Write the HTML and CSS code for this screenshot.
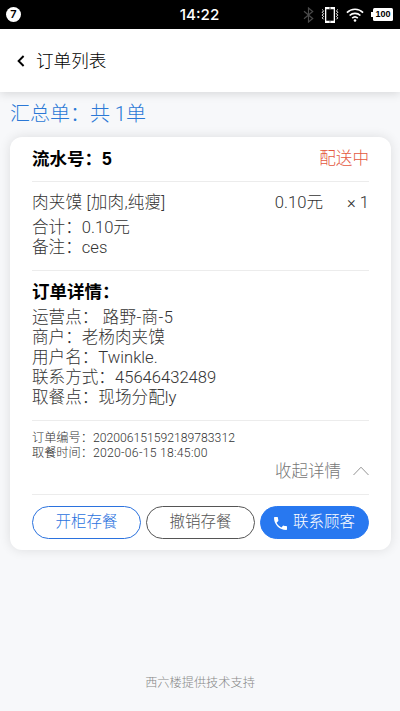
FILE: index.html
```html
<!DOCTYPE html>
<html lang="zh-CN">
<head>
<meta charset="utf-8">
<meta name="viewport" content="width=device-width, initial-scale=1">
<title>订单列表</title>
<link rel="stylesheet" href="styles.css">
</head>
<body>
<div class="status">
  <span class="badge">7</span>
  <span class="time">14:22</span>
  <div class="indicators">
    <svg class="bluetooth" width="11" height="16" viewBox="0 0 11 16"><path d="M1 4.3l8.7 7.2L5.5 15V1l4.2 3.5L1 11.7" fill="none" stroke="#4a4a4a" stroke-width="1.2"/></svg>
    <svg class="vibrate" width="18" height="16" viewBox="0 0 18 16"><path fill="#fff" fill-rule="evenodd" d="M4 0h10v16H4zM5.3 2.2v11.6h7.4V2.2z"/><path d="M8 1.1h2M8.3 14.9h1.4" stroke="#000" stroke-width=".7"/><path d="M1.2 2.5l1.4 1.4-1.4 1.4 1.4 1.4-1.4 1.4 1.4 1.4-1.4 1.4 1.4 1.4M16.8 2.5l-1.4 1.4 1.4 1.4-1.4 1.4 1.4 1.4-1.4 1.4 1.4 1.4-1.4 1.4" fill="none" stroke="#fff" stroke-width="1"/></svg>
    <svg class="wifi" width="18" height="14" viewBox="0 0 18 14"><path d="M.9 4.600a11.600 11.600 0 0 1 16.200 0M3.600 7.500a7.800 7.800 0 0 1 10.800 0M6.200 10.200a4.100 4.100 0 0 1 5.600 0" fill="none" stroke="#fff" stroke-width="1.6"/><circle cx="9" cy="12.5" r="1.3" fill="#fff"/></svg>
    <span class="battery">100</span>
  </div>
</div>
<header class="nav">
  <svg width="8" height="12" viewBox="0 0 8 12"><path d="M6.6 1L1.6 6l5 5" fill="none" stroke="#000" stroke-width="1.9"/></svg>
  <h1>订单列表</h1>
</header>
<main>
  <div class="summary">汇总单：共 1单</div>
  <article class="card">
    <div class="card-head"><h2>流水号：5</h2><span class="state">配送中</span></div>
    <section class="goods">
      <div class="item"><span class="name">肉夹馍 [加肉,纯瘦]</span><span class="price">0.10元</span><span class="count">× 1</span></div>
      <p>合计：0.10元</p>
      <p>备注：ces</p>
    </section>
    <section class="details">
      <h2>订单详情：</h2>
      <p>运营点：&nbsp;<span class="wide">路野-商-5</span></p>
      <p>商户：老杨肉夹馍</p>
      <p>用户名：Twinkle.</p>
      <p>联系方式：45646432489</p>
      <p>取餐点：现场分配ly</p>
    </section>
    <section class="meta">
      <p>订单编号：202006151592189783312</p>
      <p>取餐时间：<span class="date">2020-06-15 18:45:00</span></p>
      <div class="toggle"><span>收起详情</span><svg width="16" height="10" viewBox="0 0 16 10"><path d="M.5 9L8 1.2 15.5 9" fill="none" stroke="#888" stroke-width=".9"/></svg></div>
    </section>
    <div class="actions">
      <button class="btn open">开柜存餐</button>
      <button class="btn cancel">撤销存餐</button>
      <button class="btn call"><svg width="13" height="13" viewBox="3 3 18 18"><path fill="#fff" d="M6.6 10.8c1.4 2.8 3.8 5.1 6.6 6.6l2.2-2.2c.3-.3.7-.4 1-.2 1.1.4 2.3.6 3.6.6.6 0 1 .4 1 1V20c0 .6-.4 1-1 1C10.600 21 3 13.400 3 4c0-.6.4-1 1-1h3.500c.6 0 1 .4 1 1 0 1.200.2 2.400.6 3.600.1.300 0 .7-.2 1z"/></svg>联系顾客</button>
    </div>
  </article>
</main>
<footer>西六楼提供技术支持</footer>
</body>
</html>
```
FILE: styles.css
```css
* { box-sizing: border-box; }
h1, h2, p { margin: 0; }
body {
  margin: 0;
  height: 711px;
  display: flex;
  flex-direction: column;
  overflow: hidden;
  background: #f7f8fa;
  color: #333;
  font: 300 16.6px/20px Roboto, "Noto Sans CJK SC", sans-serif;
}
.status {
  height: 29px;
  flex: none;
  display: grid;
  grid-template-columns: 1fr auto 1fr;
  align-items: center;
  padding: 0 7px 0 6px;
  background: #000;
  color: #fff;
}
.badge {
  width: 15px;
  height: 15px;
  border-radius: 50%;
  background: #fff;
  color: #000;
  font: 600 11px/15px Inter, sans-serif;
  text-align: center;
}
.time { font: 500 15.2px/20px Inter, sans-serif; }
.indicators { display: flex; align-items: center; justify-content: flex-end; }
.bluetooth { margin-right: 7px; }
.wifi { margin-left: 7px; }
.battery {
  position: relative;
  width: 20px;
  height: 13px;
  margin-left: 9px;
  border-radius: 1.5px;
  background: #fff;
  color: #000;
  font: 700 9px/13px "Liberation Sans", sans-serif;
  text-align: center;
}
.battery::before {
  content: "";
  position: absolute;
  left: -2px;
  top: 4px;
  width: 2px;
  height: 5px;
  background: #fff;
}
.nav {
  height: 63px;
  flex: none;
  display: flex;
  align-items: center;
  gap: 11px;
  padding-left: 17px;
  background: #fff;
  box-shadow: 0 2px 9px rgba(0, 0, 0, .13);
}
h1 { font-size: 17.6px; font-weight: 300; color: #000; }
.summary { height: 45px; padding: 7px 10px 0; color: #2b78d6; font-size: 20px; line-height: 30px; }
.card {
  height: 413px;
  margin: 0 9px 0 10px;
  padding: 0 22px 0 22px;
  border-radius: 12px;
  background: #fff;
  box-shadow: 0 0 12px rgba(0, 0, 0, .11);
}
.card-head { height: 45px; display: flex; justify-content: space-between; line-height: 44px; border-bottom: 1px solid #ececec; }
h2 { color: #000; font-family: "Liberation Sans", "Noto Sans CJK SC", sans-serif; font-size: 17.5px; font-weight: 600; line-height: inherit; }
.state { color: #e4583e; }
.goods { height: 89px; padding-top: 11px; border-bottom: 1px solid #ececec; }
.item { display: flex; height: 25px; }
.name { letter-spacing: .2px; }
.price { margin-left: auto; }
.count { width: 46px; text-align: right; }
.details { height: 150px; padding-top: 11px; border-bottom: 1px solid #ececec; }
.details h2 { height: 26px; line-height: 20px; }
.wide { letter-spacing: .4px; }
.meta { height: 74px; padding-top: 10px; font-size: 12.2px; line-height: 15px; border-bottom: 1px solid #ececec; }
.date { letter-spacing: .27px; }
.toggle { display: flex; justify-content: flex-end; align-items: center; gap: 12px; height: 20px; color: #777; font-size: 16.5px; }
.actions { display: flex; justify-content: space-between; padding-top: 10.500px; }
.btn {
  width: 109px;
  height: 33.500px;
  display: flex;
  align-items: center;
  justify-content: center;
  gap: 6px;
  padding: 0;
  border: 1px solid #555;
  border-radius: 17px;
  background: #fff;
  color: #555;
  font: inherit;
  font-size: 15.5px;
}
.open { border-color: #2b72de; color: #2b72de; }
.call { border-color: #2878f0; background: #2878f0; color: #fff; }
.call svg { margin-top: 2px; }
footer { margin-top: auto; padding-bottom: 18px; color: #888; font-size: 12.2px; text-align: center; }
```
